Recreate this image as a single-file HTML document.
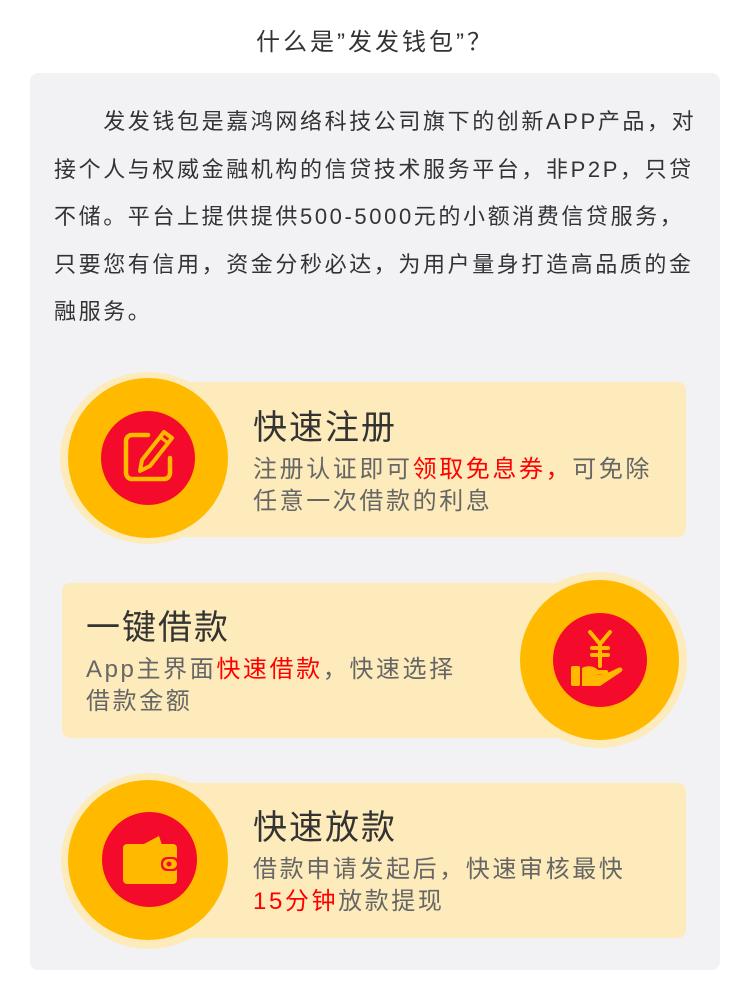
<!DOCTYPE html>
<html><head><meta charset="utf-8"><style>
*{margin:0;padding:0;box-sizing:border-box}
body{width:750px;height:1001px;background:#fff;font-family:"Liberation Sans","Noto Sans CJK SC",sans-serif;position:relative;overflow:hidden}
.t{position:absolute;top:22px;left:0;width:750px;text-align:center;font-size:24px;letter-spacing:3px;color:#333}
.panel{position:absolute;left:30px;top:73px;width:690px;height:897px;background:#f2f2f5;border-radius:8px}
.p{position:absolute;left:54px;top:98px;width:660px;font-size:22px;line-height:47.5px;color:#333;letter-spacing:2.6px;white-space:nowrap}
.card{position:absolute;background:#feebbb;border-radius:8px;height:155px}
.c{position:absolute;border-radius:50%}
.h{position:absolute;font-size:34px;letter-spacing:2px;color:#333;white-space:nowrap}
.s{position:absolute;font-size:24px;letter-spacing:2.6px;line-height:32px;color:#666;white-space:nowrap}
.r{color:#f00}
</style></head><body>
<div class="t">什么是”发发钱包”？</div>
<div class="panel"></div>
<div class="p">&emsp;&emsp;发发钱包是嘉鸿网络科技公司旗下的创新APP产品，对<br>接个人与权威金融机构的信贷技术服务平台，非P2P，只贷<br>不储。平台上提供提供500-5000元的小额消费信贷服务，<br>只要您有信用，资金分秒必达，为用户量身打造高品质的金<br>融服务。</div>

<div class="card" style="left:165px;top:382px;width:521px"></div>
<div class="c" style="left:60px;top:372px;width:176px;height:172px;background:#feebbb"></div>
<div class="c" style="left:68px;top:378px;width:160px;height:160px;background:#ffba00"></div>
<div class="c" style="left:101px;top:411px;width:94px;height:94px;background:#f40a2a"></div>
<svg style="position:absolute;left:118px;top:428px" width="60" height="60" viewBox="0 0 60 60"><path d="M30 7H14a6 6 0 0 0-6 6v32a6 6 0 0 0 6 6h32a6 6 0 0 0 6-6V30" fill="none" stroke="#ffba00" stroke-width="4.5" stroke-linecap="round"/><path d="M46 4l8 6-22 28-10 5 2-11z" fill="none" stroke="#ffba00" stroke-width="4" stroke-linejoin="round"/><path d="M42 9l8 6" stroke="#ffba00" stroke-width="3"/></svg>
<div class="h" style="left:253px;top:400px">快速注册</div>
<div class="s" style="left:253px;top:454px">注册认证即可<span class="r">领取免息券，</span>可免除<br>任意一次借款的利息</div>

<div class="card" style="left:62px;top:583px;width:560px"></div>
<div class="c" style="left:511px;top:572px;width:176px;height:176px;background:#feebbb"></div>
<div class="c" style="left:520px;top:580px;width:159px;height:160px;background:#ffba00"></div>
<div class="c" style="left:553px;top:613px;width:94px;height:94px;background:#f40a2a"></div>
<svg style="position:absolute;left:568px;top:628px" width="64" height="64" viewBox="0 0 64 64"><path d="M22 4l10 12 10-12M32 16v22M24 20h16M24 27h16" fill="none" stroke="#ffba00" stroke-width="4" stroke-linecap="round"/><rect x="3" y="38" width="9" height="20" rx="2" fill="#ffba00"/><path d="M14 40c6-3 12-2 16 2h8c3 0 3 4 0 4h-10c6 1 10 0 22-6 4-2 6 2 3 4L32 58H14z" fill="#ffba00"/></svg>
<div class="h" style="left:86px;top:600px">一键借款</div>
<div class="s" style="left:86px;top:654px">App主界面<span class="r">快速借款</span>，快速选择<br>借款金额</div>

<div class="card" style="left:165px;top:783px;width:521px"></div>
<div class="c" style="left:61px;top:773px;width:176px;height:176px;background:#feebbb"></div>
<div class="c" style="left:68px;top:780px;width:160px;height:160px;background:#ffba00"></div>
<div class="c" style="left:102px;top:812px;width:95px;height:95px;background:#f40a2a"></div>
<svg style="position:absolute;left:120px;top:830px" width="60" height="60" viewBox="0 0 60 60"><path d="M22 15l17-9 3 9z" fill="#ffba00"/><rect x="3" y="14" width="54" height="40" rx="4" fill="#ffba00"/><rect x="41" y="27" width="18" height="14" rx="6" fill="#f40a2a"/><rect x="43" y="29" width="14" height="10" rx="5" fill="#ffba00"/><circle cx="49" cy="34" r="2.5" fill="#f40a2a"/></svg>
<div class="h" style="left:253px;top:800px">快速放款</div>
<div class="s" style="left:253px;top:854px">借款申请发起后，快速审核最快<br><span class="r">15分钟</span>放款提现</div>
</body></html>
